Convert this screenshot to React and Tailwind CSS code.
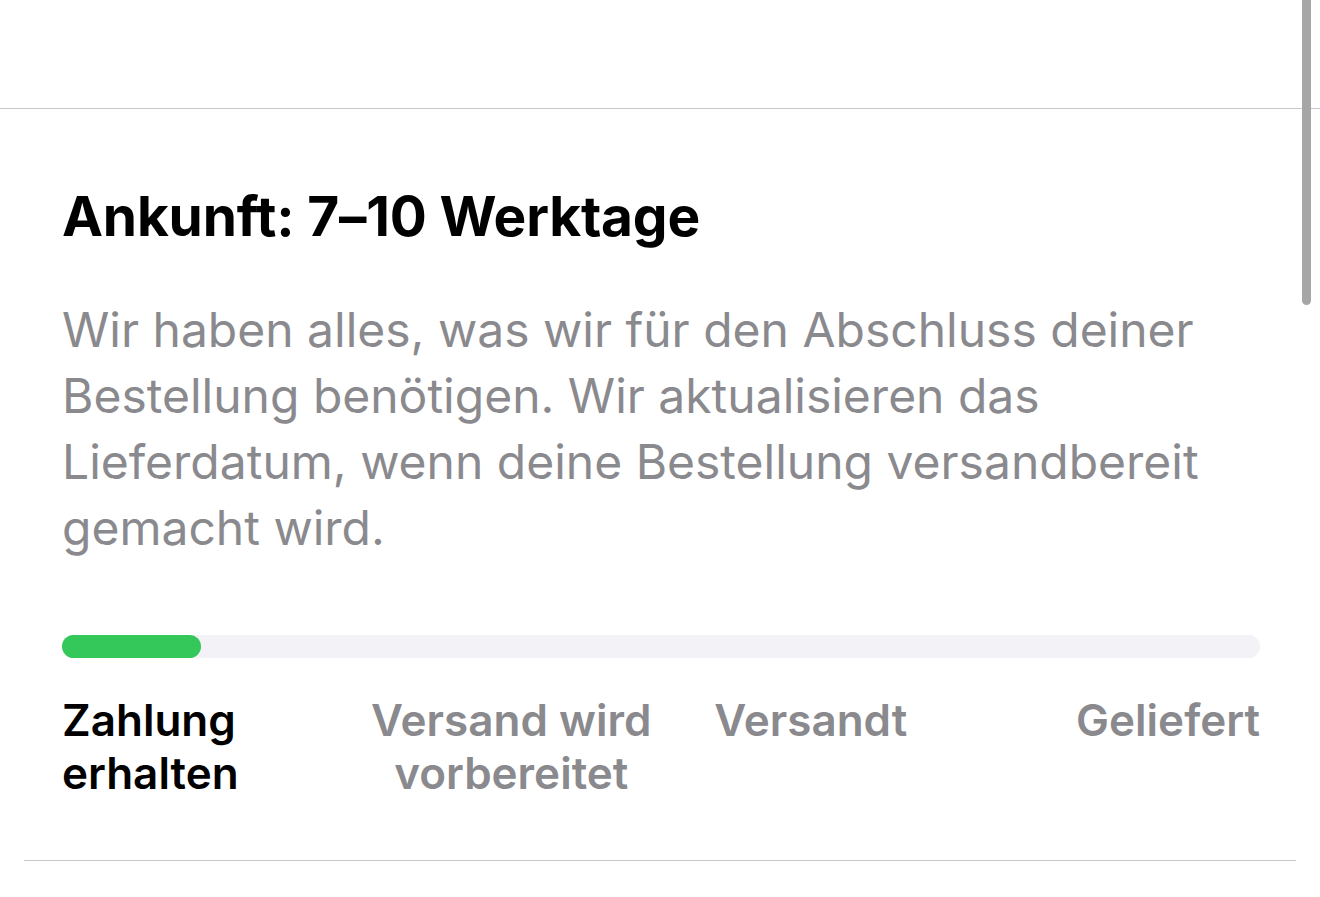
import React from 'react';

const steps = [
  { label: ['Zahlung', 'erhalten'], align: 'text-left', done: true },
  { label: ['Versand wird', 'vorbereitet'], align: 'text-center', done: false },
  { label: ['Versandt'], align: 'text-center', done: false },
  { label: ['Geliefert'], align: 'text-right', done: false },
];

export default function App() {
  return (
    <div className="relative min-h-screen w-full overflow-hidden bg-white" style={{ fontFamily: 'Inter, "Noto Sans", sans-serif' }}>
      {/* top bar area */}
      <div className="h-[109px] border-b border-[#c8c8cc]" />

      <section className="pl-[62px] pr-[60px]">
        <h2 className="mt-[77px] text-[55px] leading-[60px] font-bold tracking-[-0.2px] text-black">
          Ankunft: 7–10 Werktage
        </h2>
        <p className="mt-[51px] text-[48px] leading-[66px] text-[#8a8a8e]">
          Wir haben alles, was wir für den Abschluss deiner<br />
          Bestellung benötigen. Wir aktualisieren das<br />
          Lieferdatum, wenn deine Bestellung versandbereit<br />
          gemacht wird.
        </p>

        <div className="mt-[74px] h-[23px] w-full rounded-full bg-[#f2f2f7]">
          <div className="h-full w-[139px] rounded-full bg-[#34c759]" />
        </div>

        <div className="mt-[36px] grid grid-cols-4">
          {steps.map((s) => (
            <div
              key={s.label[0]}
              className={`${s.align} text-[44px] leading-[53px] font-semibold ${s.done ? 'text-black' : 'text-[#8a8a8e]'}`}
            >
              {s.label.map((l) => (
                <div key={l}>{l}</div>
              ))}
            </div>
          ))}
        </div>
      </section>

      <div className="mx-6 mt-[60px] border-t border-[#c8c8cc]" />

      {/* scroll indicator */}
      <div className="absolute right-[9px] top-0 h-[305px] w-[9px] rounded-b-full bg-[#a6a6a6]" />
    </div>
  );
}
